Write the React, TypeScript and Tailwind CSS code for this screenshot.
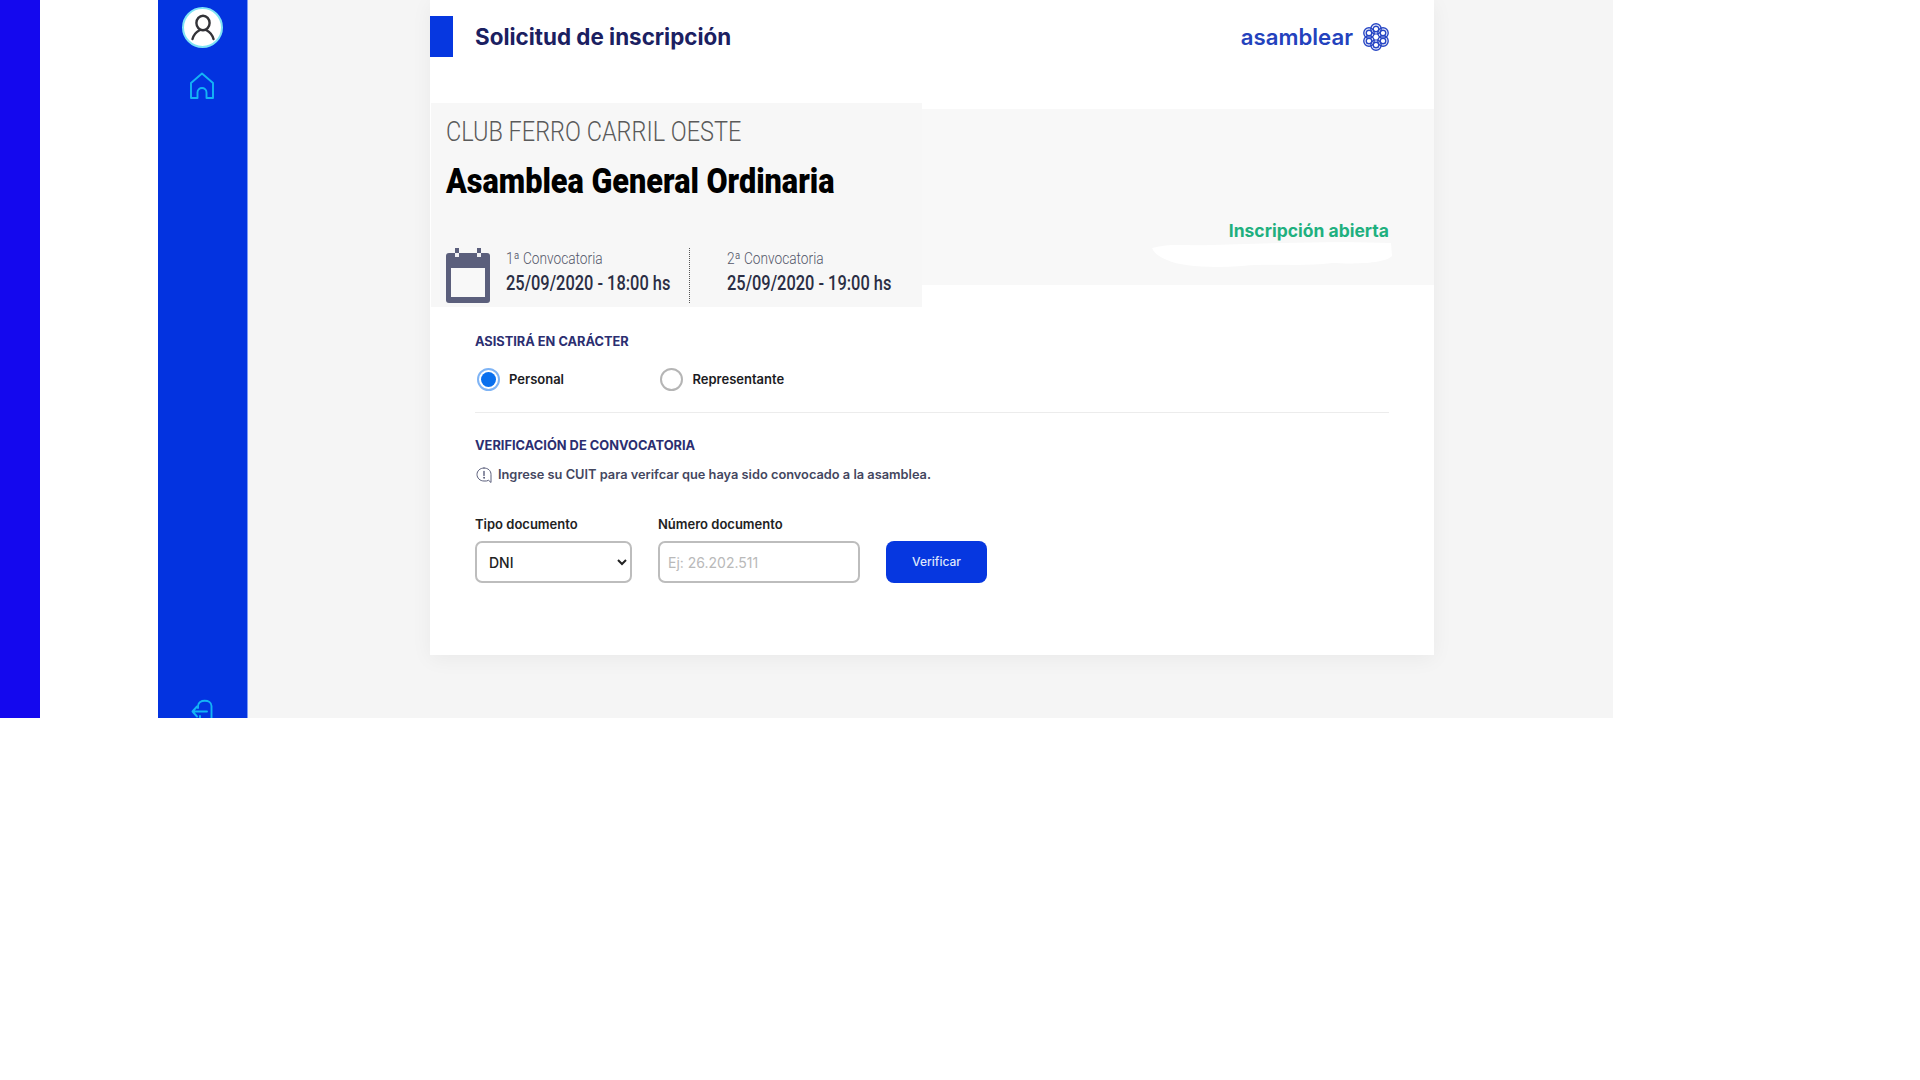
import React from "react";

const Avatar = () => (
  <div className="w-[41px] h-[41px] rounded-full bg-white border-2 border-[#7fe3f5] flex items-center justify-center">
    <svg width="30" height="30" viewBox="0 0 30 30" fill="none" stroke="#333338" strokeWidth="2.4" strokeLinecap="round">
      <ellipse cx="15" cy="10" rx="6.6" ry="7.2" />
      <path d="M4.5 26 C6 20.5 9 18.5 11.5 17.2 M25.5 26 C24 20.5 21 18.5 18.5 17.2" />
    </svg>
  </div>
);

const Home = () => (
  <svg width="26" height="30" viewBox="0 0 26 30" fill="none" stroke="#14b4f5" strokeWidth="1.9" strokeLinejoin="round">
    <path d="M13 2.5 L24 12 V27 H17.5 V21.5 C17.5 15.5 8.5 15.5 8.5 21.5 V27 H2 V12 Z" />
  </svg>
);

const Exit = () => (
  <svg width="24" height="26" viewBox="0 0 24 26" fill="none" stroke="#14b4f5" strokeWidth="1.9" strokeLinecap="round" strokeLinejoin="round">
    <path d="M7 10 V8 C7 1 20.5 1 20.5 8 V24 H9 V18" />
    <path d="M1.5 13.5 H16 M6 8.5 L1.5 13.5 L6 18.5" />
  </svg>
);

const Rosette = () => (
  <svg width="28" height="28" viewBox="0 0 28 28" fill="none" stroke="#2746c4" strokeWidth="1.4">
    {[[14, 6], [21, 10], [21, 18], [14, 22], [7, 18], [7, 10]].map(([x, y], i) => (
      <g key={i}>
        <circle cx={x} cy={y} r="5.2" />
        <circle cx={x} cy={y} r="2.8" />
      </g>
    ))}
    <path d="M14 11 L16.5 14 L14 17 L11.5 14 Z" fill="#ffffff" stroke="none" />
  </svg>
);

const Calendar = () => (
  <svg width="44" height="55" viewBox="0 0 44 55" className="shrink-0">
    <rect x="0" y="5" width="44" height="50" rx="3" fill="#5b5f7c" />
    <rect x="5" y="20" width="34" height="29" fill="#f8f8f8" />
    <rect x="9" y="0" width="4" height="9" fill="#5b5f7c" />
    <rect x="31" y="0" width="4" height="9" fill="#5b5f7c" />
    <rect x="9" y="5" width="4" height="4" fill="#f0f0f4" />
    <rect x="31" y="5" width="4" height="4" fill="#f0f0f4" />
  </svg>
);

const InfoBubble = () => (
  <svg width="17" height="17" viewBox="0 0 17 17" fill="none" stroke="#5b5f7c" strokeWidth="1" strokeLinecap="round">
    <path d="M8 1 C12 1 15 3.6 15 7.5 V15.5 L12.6 13.3 C11.3 14 9.7 14.2 8 14 C4 14 1 11 1 7.5 C1 3.9 4 1 8 1 Z" />
    <path d="M8 4.5 V8.5" strokeWidth="1.4" />
    <circle cx="8" cy="10.8" r=".5" fill="#5b5f7c" />
  </svg>
);

const Fecha = ({ label, value }: { label: string; value: string }) => (
  <div className="flex flex-col pt-[1px]">
    <span className="font-['Roboto',sans-serif] font-light text-[16px] leading-[20px] text-[#55586a] scale-x-[0.855] origin-left whitespace-nowrap">{label}</span>
    <span className="mt-[2px] font-['Roboto',sans-serif] font-medium text-[20px] leading-[24px] text-[#2b2e44] scale-x-[0.82] origin-left whitespace-nowrap">{value}</span>
  </div>
);

export default function App() {
  return (
    <div className="w-[1920px] h-[1080px] bg-white font-['Inter',sans-serif] overflow-hidden">
      <div className="flex h-[718px] overflow-hidden">
        <div className="w-[40px] bg-[#1408ee]" />
        <div className="w-[118px] bg-white" />
        <aside className="w-[90px] bg-[#0333e0] border-r border-[#7d9bf5] flex flex-col items-center pt-[7px]">
          <Avatar />
          <div className="mt-[23px] flex -translate-x-[1px]"><Home /></div>
          <div className="mt-auto flex -mb-[6px]"><Exit /></div>
        </aside>
        <main className="w-[1365px] bg-[#f5f5f5] pl-[182px]">
          <section className="w-[1004px] h-[655px] bg-white shadow-[0_4px_20px_rgba(0,0,0,0.05)] flex flex-col">
            <header className="h-[103px] pt-[16px] pr-[44px] flex items-start">
              <div className="w-[23px] h-[41px] bg-[#0637e0]" />
              <h1 className="ml-[22px] text-[22.4px] leading-[41px] font-bold text-[#1b2061] whitespace-nowrap">Solicitud de inscripción</h1>
              <div className="ml-auto h-[41px] flex items-center gap-[9px]">
                <span className="text-[22.2px] leading-[28px] font-semibold text-[#2342bd]">asamblear</span>
                <Rosette />
              </div>
            </header>
            <div className="flex items-start">
              <div className="ml-px w-[491px] h-[204px] bg-[#f7f7f7] pl-[15px] pt-[13px] flex flex-col">
                <p className="font-['Roboto',sans-serif] font-light text-[27px] leading-[32px] text-[#5a5a5a] scale-x-[0.87] origin-left whitespace-nowrap">CLUB FERRO CARRIL OESTE</p>
                <h2 className="mt-[13px] font-['Roboto',sans-serif] font-black text-[35px] leading-[42px] text-black scale-x-[0.875] origin-left whitespace-nowrap">Asamblea General Ordinaria</h2>
                <div className="mt-[45px] flex items-start">
                  <Calendar />
                  <div className="ml-[16px] w-[183px]">
                    <Fecha label="1ª Convocatoria" value="25/09/2020 - 18:00 hs" />
                  </div>
                  <div className="h-[55px] border-l border-dotted border-[#555]" />
                  <div className="ml-[37px]">
                    <Fecha label="2ª Convocatoria" value="25/09/2020 - 19:00 hs" />
                  </div>
                </div>
              </div>
              <div className="mt-[6px] w-[512px] h-[176px] bg-[#f8f8f8] flex flex-col items-end pr-[45px] pt-[110px]">
                <span className="text-[17.5px] leading-[24px] font-bold text-[#1fb07f] whitespace-nowrap">Inscripción abierta</span>
                <svg width="240" height="26" viewBox="0 0 240 26" className="-mr-[3px] -mt-[1px]">
                  <path d="M0 6 C20 1 30 4 60 3 L130 1 C170 0 210 0 239 1 L240 14 C232 22 200 22 180 21 C150 25 120 21 90 24 C60 26 30 25 15 18 C6 14 2 11 0 6 Z" fill="#ffffff" />
                </svg>
              </div>
            </div>
            <div className="pl-[45px] pr-[45px] pt-[27px]">
              <h3 className="text-[12.8px] leading-[16px] font-bold text-[#2b2e70] whitespace-nowrap">ASISTIRÁ EN CARÁCTER</h3>
              <div className="mt-[17px] flex items-center h-[24px]">
                <div className="w-[185px] flex items-center">
                  <span className="ml-[2px] w-[23px] h-[23px] rounded-full border-2 border-[#7fb4f5] flex items-center justify-center">
                    <span className="w-[15px] h-[15px] rounded-full bg-[#0a70ee]" />
                  </span>
                  <span className="ml-[9px] text-[13px] leading-[26px] font-semibold text-[#1b1b22]">Personal</span>
                </div>
                <span className="w-[23px] h-[23px] rounded-full border-2 border-[#b5b5b5]" />
                <span className="ml-[9.5px] text-[13px] leading-[26px] font-semibold text-[#1b1b22]">Representante</span>
              </div>
              <div className="mt-[21px] h-px bg-[#ececec]" />
              <h3 className="mt-[25px] text-[12.85px] leading-[16px] font-bold text-[#2b2e70] whitespace-nowrap">VERIFICACIÓN DE CONVOCATORIA</h3>
              <div className="mt-[12px] flex items-center pl-[1px]">
                <InfoBubble />
                <span className="ml-[5px] text-[12.8px] leading-[18px] font-semibold text-[#44475f] whitespace-nowrap">Ingrese su CUIT para verifcar que haya sido convocado a la asamblea.</span>
              </div>
              <div className="mt-[32px] flex items-end">
                <label className="flex flex-col w-[183px]">
                  <span className="text-[13px] leading-[16px] font-semibold text-[#222]">Tipo documento</span>
                  <select defaultValue="DNI" className="mt-[9px] w-[157px] h-[42px] px-[8px] bg-white border-2 border-[#bdbdbd] rounded-[7px] text-[14px] font-medium text-[#222]">
                    <option>DNI</option>
                  </select>
                </label>
                <label className="flex flex-col w-[228px]">
                  <span className="text-[13px] leading-[16px] font-semibold text-[#222]">Número documento</span>
                  <input placeholder="Ej: 26.202.511" className="mt-[9px] w-[202px] h-[42px] px-[8px] bg-white border-2 border-[#bdbdbd] rounded-[7px] text-[14px] placeholder:text-[#b9b9b9]" />
                </label>
                <button className="w-[101px] h-[42px] rounded-[8px] bg-[#0637e0] text-[12px] font-medium text-[#dfe6fb]">Verificar</button>
              </div>
            </div>
          </section>
        </main>
      </div>
    </div>
  );
}
